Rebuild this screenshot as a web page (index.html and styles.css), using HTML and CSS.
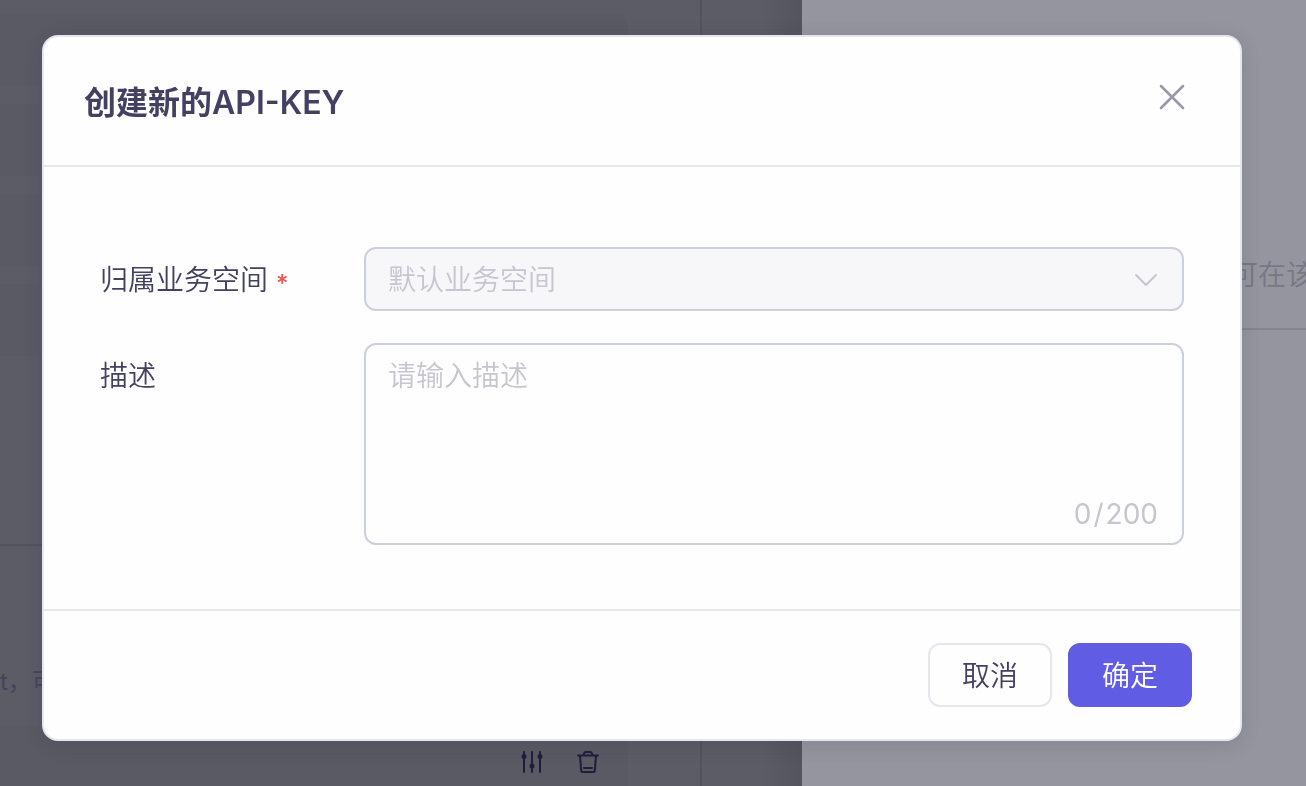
FILE: index.html
```html
<!DOCTYPE html>
<html lang="zh-CN">
  <head>
    <meta charset="UTF-8" />
    <title>创建新的API-KEY</title>
    <link rel="stylesheet" href="styles.css">
  </head>

  <body>
    <div class="page">
      <div class="sidebar">
        <div class="list">
          <div class="item"></div>
          <div class="item"></div>
          <div class="item"></div>
          <div class="item"></div>
        </div>
        <div class="note">t，可</div>
        <div class="tools">
          <button class="tool" type="button" aria-label="设置">
            <svg width="24" height="24" viewBox="0 0 24 24" fill="currentColor" stroke="currentColor" stroke-width="2" stroke-linecap="round">
              <path d="M4 2v20M12 2v20M20 2v20" />
              <circle cx="4" cy="6.500" r="1.500" />
              <circle cx="12" cy="16" r="1.500" />
              <circle cx="20" cy="6.500" r="1.500" />
            </svg>
          </button>
          <button class="tool" type="button" aria-label="删除">
            <svg width="24" height="24" viewBox="0 0 24 24" fill="none" stroke="currentColor" stroke-width="2" stroke-linecap="round" stroke-linejoin="round">
              <path d="M2 5.500h20M7.500 5.500l.5-2q.4-1.500 2-1.500h4q1.600 0 2 1.500l.5 2M4 5.500l1.200 15.500q.1 1 1 1h11.600q.9 0 1-1L20 5.500M8 18h8" />
            </svg>
          </button>
        </div>
      </div>
      <div class="content">
        <div class="intro">可在该</div>
      </div>
    </div>

    <div class="overlay">
      <div class="modal" role="dialog" aria-modal="true" aria-labelledby="modal-title">
        <div class="modal-header">
          <h2 class="modal-title" id="modal-title">创建新的API-KEY</h2>
          <button class="close" type="button" aria-label="关闭">
            <svg width="26" height="26" viewBox="0 0 26 26" fill="none" stroke="currentColor" stroke-width="2.500" stroke-linecap="round">
              <path d="M2 2l22 22M24 2L2 24" />
            </svg>
          </button>
        </div>

        <form class="modal-body" id="key-form">
          <label class="label" for="workspace">归属业务空间<span class="required">*</span></label>
          <div class="field">
            <select class="select" id="workspace" disabled>
              <option>默认业务空间</option>
            </select>
            <svg class="arrow" width="24" height="14" viewBox="0 0 24 14" fill="none" stroke="currentColor" stroke-width="2" stroke-linecap="round" stroke-linejoin="round">
              <path d="M2 2l10 10L22 2" />
            </svg>
          </div>
          <label class="label" for="description">描述</label>
          <div class="field">
            <textarea class="textarea" id="description" maxlength="200" placeholder="请输入描述"></textarea>
            <span class="count"><span>0</span><span>/</span><span>200</span></span>
          </div>
        </form>

        <div class="modal-footer">
          <button class="btn" type="button">取消</button>
          <button class="btn primary" type="submit" form="key-form">确定</button>
        </div>
      </div>
    </div>
  </body>
</html>
```

FILE: styles.css
```css
* {
  box-sizing: border-box;
}

body {
  margin: 0;
  overflow: hidden;
  font-family: Inter, "Noto Sans CJK SC", sans-serif;
  font-size: 28px;
  font-weight: 350;
  line-height: 40px;
  color: #434061;
}

button,
select,
textarea {
  font: inherit;
  color: inherit;
}

svg {
  display: block;
}

.page {
  display: flex;
  height: 100vh;
}

/* left pane */
.sidebar {
  width: 61.4%;
  background:
    linear-gradient(to left, #54545f, transparent 40px),
    linear-gradient(#53535e, #53535e) 700px 0 / 2px 100% no-repeat,
    #5c5c67;
}

.list {
  display: flex;
  flex-direction: column;
  gap: 18px;
  width: 628px;
  height: 546px;
  padding-top: 14px;
  border-bottom: 2px solid #53535e;
}

.item {
  height: 72px;
  border-radius: 0 12px 12px 0;
  background: #5a5a65;
}

.note {
  height: 180px;
  padding-top: 116px;
  font-size: 24px;
  font-weight: 400;
  color: #454359;
}

.tools {
  display: flex;
  justify-content: flex-end;
  gap: 32px;
  width: 628px;
  height: 60px;
  padding: 24px 28px 0;
  border-radius: 0 12px 0 0;
  background: #5a5a65;
}

.tool {
  height: 24px;
  padding: 0;
  border: 0;
  background: none;
  color: #201d3b;
}

/* right pane */
.content {
  flex: 1;
  background: #95959f;
}

.intro {
  display: flex;
  justify-content: flex-end;
  height: 330px;
  padding-top: 255px;
  margin-right: -8px;
  border-bottom: 2px solid #858592;
  color: #787785;
}

/* dialog */
.overlay {
  position: fixed;
  inset: 0;
  padding: 35px 64px 45px 42px;
}

.modal {
  border: 2px solid #e6e6ed;
  border-radius: 16px;
  background: #fefefe;
  box-shadow: 0 4px 20px rgba(38, 36, 50, 0.14);
}

.modal-header {
  display: flex;
  justify-content: space-between;
  align-items: center;
  height: 130px;
  padding: 0 55px 0 40px;
  border-bottom: 2px solid #e6e6ed;
}

.modal-title {
  margin: 0;
  padding-top: 3px;
  font-size: 32px;
  font-weight: 600;
}

.close {
  padding: 0 0 8px;
  border: 0;
  background: none;
  color: #9998a9;
}

.modal-body {
  display: grid;
  grid-template-columns: 264px 1fr;
  gap: 32px 0;
  padding: 80px 56px 64px;
}

.label {
  display: flex;
  align-items: flex-start;
  padding-top: 13px;
}

.required {
  padding: 4px 0 0 8px;
  font-size: 24px;
  font-weight: 500;
  color: #f0544f;
}

.field {
  position: relative;
  display: flex;
}

.select {
  width: 100%;
  height: 64px;
  padding: 2px 22px 0;
  appearance: none;
  border: 2px solid #cccfdc;
  border-radius: 12px;
  background: #f7f7fa;
  color: #c6c5d0;
  opacity: 1;
}

.arrow {
  position: absolute;
  top: 26px;
  right: 26px;
  color: #c6c5d0;
  pointer-events: none;
}

.textarea {
  width: 100%;
  height: 202px;
  padding: 11px 22px;
  border: 2px solid #cccfdc;
  border-radius: 12px;
  outline: none;
  resize: none;
  background: #fefefe;
}

.textarea::placeholder {
  color: #c6c5d0;
}

.count {
  position: absolute;
  right: 26px;
  bottom: 11px;
  display: flex;
  gap: 2px;
  font-weight: 400;
  color: #c6c5d0;
  pointer-events: none;
}

.modal-footer {
  display: flex;
  justify-content: flex-end;
  gap: 16px;
  padding: 32px 48px;
  border-top: 2px solid #e6e6ed;
}

.btn {
  width: 124px;
  height: 64px;
  padding: 2px 0 0;
  border: 2px solid #e6e6ed;
  border-radius: 12px;
  background: #fefefe;
}

.primary {
  border-color: #615ce4;
  background: #615ce4;
  color: #fff;
}
```
